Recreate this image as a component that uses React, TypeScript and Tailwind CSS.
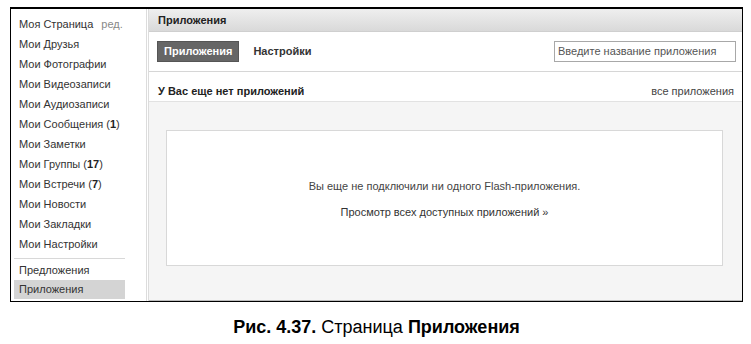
import React from 'react';

const menu: { label: string; count?: number }[] = [
  { label: 'Мои Друзья' },
  { label: 'Мои Фотографии' },
  { label: 'Мои Видеозаписи' },
  { label: 'Мои Аудиозаписи' },
  { label: 'Мои Сообщения', count: 1 },
  { label: 'Мои Заметки' },
  { label: 'Мои Группы', count: 17 },
  { label: 'Мои Встречи', count: 7 },
  { label: 'Мои Новости' },
  { label: 'Мои Закладки' },
  { label: 'Мои Настройки' },
];

export default function App() {
  return (
    <div className="w-[751px] h-[344px] bg-white pt-[7px] pl-[10px] font-['Liberation_Sans',Arial,sans-serif] text-[11px] text-[#333]">
      <div className="w-[733px] h-[295px] border border-t-2 border-black flex">
        <aside className="w-[135px] pt-[5px] px-[3px]">
          <div className="h-[20px] flex items-center pl-[5px]">
            <span>Моя Страница</span>
            <span className="ml-[8px] text-[#888]">ред.</span>
          </div>
          {menu.map((m) => (
            <div key={m.label} className="h-[20px] flex items-center pl-[5px]">
              {m.label}
              {m.count !== undefined && (
                <span className="ml-[3px]">
                  (<b className="text-[#222]">{m.count}</b>)
                </span>
              )}
            </div>
          ))}
          <div className="mt-[4px] mb-[2px] border-t border-[#d8d8d8] w-[111px]" />
          <div className="h-[19px] flex items-center pl-[5px]">Предложения</div>
          <div className="h-[19px] w-[111px] flex items-center pl-[5px] bg-[#d4d4d4]">Приложения</div>
        </aside>

        <main className="flex-1 flex flex-col border-l-[3px] border-double border-[#dcdcdc]">
          <div className="h-[23px] flex items-center pl-[9px] font-bold text-[#222] bg-gradient-to-b from-[#efefef] to-[#d9d9d9] border-b border-[#cfcfcf]">
            Приложения
          </div>
          <div className="h-[40px] flex items-center justify-between pl-[8px] pr-[6px] border-b border-[#d6d6d6]">
            <div className="flex items-center">
              <div className="h-[21px] px-[6px] flex items-center bg-[#666] text-white font-bold border border-[#555]">
                Приложения
              </div>
              <div className="ml-[14px] font-bold text-[#333]">Настройки</div>
            </div>
            <div className="w-[182px] h-[21px] border border-[#a8a8a8] bg-white flex items-center pl-[3px] text-[#555]">
              Введите название приложения
            </div>
          </div>
          <div className="h-[30px] flex items-end pb-[2px] justify-between pl-[9px] pr-[8px] border-b border-[#e2e2e2]">
            <span className="font-bold text-[#222]">У Вас еще нет приложений</span>
            <span className="text-[#444]">все приложения</span>
          </div>
          <div className="flex-1 bg-[#f5f5f5] pt-[28px] pl-[17px] pr-[19px] border-b border-[#bcbcbc]">
            <div className="h-[136px] bg-white border border-[#d8d8d8] flex flex-col items-center justify-center gap-[9px] text-[#444]">
              <div className="mt-[2px]">Вы еще не подключили ни одного Flash-приложения.</div>
              <div className="text-[#333]">Просмотр всех доступных приложений »</div>
            </div>
          </div>
        </main>
      </div>
      <div className="w-[733px] mt-[12px] text-center text-[18px] text-black">
        <b>Рис. 4.37.</b> Страница <b>Приложения</b>
      </div>
    </div>
  );
}
